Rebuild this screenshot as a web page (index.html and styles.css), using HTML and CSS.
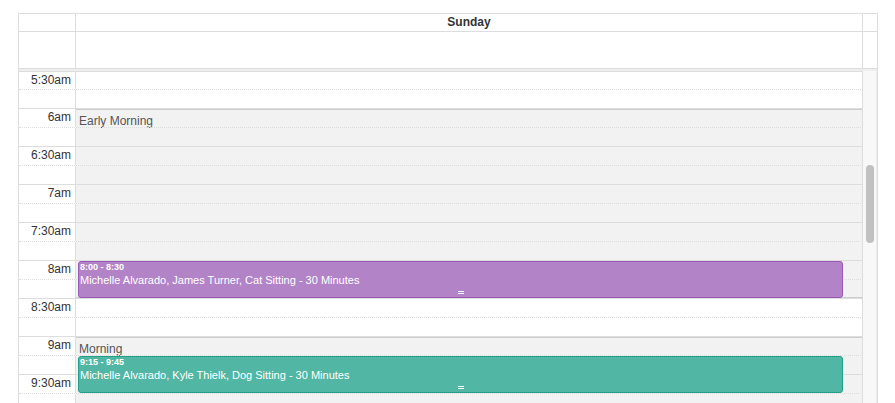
FILE: index.html
```html
<!DOCTYPE html>
<html lang="en">
<head>
    <meta charset="UTF-8">
    <title>Day Schedule</title>
    <link rel="stylesheet" href="styles.css">
</head>
<body>
    <div class="calendar">
        <div class="cal-row cal-head">
            <div class="axis"></div>
            <div class="day-cell day-name">Sunday</div>
            <div class="gutter"></div>
        </div>
        <div class="cal-row cal-allday">
            <div class="axis"></div>
            <div class="day-cell"></div>
            <div class="gutter"></div>
        </div>
        <div class="divider"></div>
        <div class="cal-body">
            <div class="slots">
                <div class="bg-layer">
                    <div class="bg-event" style="top: 37px; height: 190px;">Early Morning</div>
                    <div class="bg-event" style="top: 265px; height: 400px;">Morning</div>
                </div>

                <div class="slot major first"><div class="slot-label">5:30am</div><div class="slot-lane"></div></div>
                <div class="slot minor"><div class="slot-label"></div><div class="slot-lane"></div></div>
                <div class="slot major"><div class="slot-label">6am</div><div class="slot-lane"></div></div>
                <div class="slot minor"><div class="slot-label"></div><div class="slot-lane"></div></div>
                <div class="slot major"><div class="slot-label">6:30am</div><div class="slot-lane"></div></div>
                <div class="slot minor"><div class="slot-label"></div><div class="slot-lane"></div></div>
                <div class="slot major"><div class="slot-label">7am</div><div class="slot-lane"></div></div>
                <div class="slot minor"><div class="slot-label"></div><div class="slot-lane"></div></div>
                <div class="slot major"><div class="slot-label">7:30am</div><div class="slot-lane"></div></div>
                <div class="slot minor"><div class="slot-label"></div><div class="slot-lane"></div></div>
                <div class="slot major"><div class="slot-label">8am</div><div class="slot-lane"></div></div>
                <div class="slot minor"><div class="slot-label"></div><div class="slot-lane"></div></div>
                <div class="slot major"><div class="slot-label">8:30am</div><div class="slot-lane"></div></div>
                <div class="slot minor"><div class="slot-label"></div><div class="slot-lane"></div></div>
                <div class="slot major"><div class="slot-label">9am</div><div class="slot-lane"></div></div>
                <div class="slot minor"><div class="slot-label"></div><div class="slot-lane"></div></div>
                <div class="slot major"><div class="slot-label">9:30am</div><div class="slot-lane"></div></div>
                <div class="slot minor"><div class="slot-label"></div><div class="slot-lane"></div></div>

                <div class="event-layer">
                    <div class="event event-purple" style="top: 190px; height: 37px;">
                        <div class="event-time">8:00 - 8:30</div>
                        <div class="event-title">Michelle Alvarado, James Turner, Cat Sitting - 30 Minutes</div>
                        <div class="resizer"></div>
                    </div>
                    <div class="event event-green" style="top: 285px; height: 37px;">
                        <div class="event-time">9:15 - 9:45</div>
                        <div class="event-title">Michelle Alvarado, Kyle Thielk, Dog Sitting - 30 Minutes</div>
                        <div class="resizer"></div>
                    </div>
                </div>
            </div>
            <div class="scrollbar"><div class="thumb"></div></div>
        </div>
    </div>
</body>
</html>
```

FILE: styles.css
```css
html, body {
    height: 100%;
    overflow: hidden;
}
body {
    margin: 0;
    padding: 13px 0 0 18px;
    box-sizing: border-box;
    font-family: 'Liberation Sans', Arial, sans-serif;
    font-size: 12px;
    color: #333;
    background: #fff;
}
.calendar {
    width: 860px;
    border: 1px solid #ddd;
    box-sizing: border-box;
}
.cal-row {
    display: grid;
    grid-template-columns: 57px 1fr 14px;
    border-bottom: 1px solid #ddd;
}
.cal-row .axis,
.cal-row .day-cell {
    border-right: 1px solid #ddd;
}
.cal-head {
    height: 18px;
    box-sizing: border-box;
}
.day-name {
    text-align: center;
    font-weight: bold;
    font-size: 12px;
    line-height: 17px;
}
.cal-allday {
    height: 37px;
    box-sizing: border-box;
}
.divider {
    height: 2px;
    background: #eee;
}
.cal-body {
    display: flex;
    height: 332px;
    overflow: hidden;
}
.slots {
    flex: 1;
    position: relative;
}
.slot {
    display: grid;
    grid-template-columns: 57px 1fr;
    height: 19px;
    box-sizing: border-box;
    position: relative;
    z-index: 1;
}
.slot.major {
    border-top: 1px solid #ddd;
}
.slot.minor {
    border-top: 1px dotted #ddd;
}
.slot.first {
    height: 18px;
}
.slot-label {
    border-right: 1px solid #ddd;
    text-align: right;
    padding: 1px 4px 0 0;
    line-height: 14px;
    white-space: nowrap;
}
.slot-lane {
    border-right: 1px solid #ddd;
}
.bg-layer,
.event-layer {
    position: absolute;
    top: 0;
    bottom: 0;
    left: 57px;
    right: 1px;
}
.bg-layer {
    z-index: 0;
}
.event-layer {
    z-index: 2;
}
.bg-event {
    position: absolute;
    left: 0;
    right: 0;
    background: #f2f2f2;
    border-top: 2px solid #cdcdcd;
    border-bottom: 1px solid #cdcdcd;
    box-sizing: border-box;
    color: #555;
    padding: 4px 3px 0;
    line-height: 14px;
}
.event {
    position: absolute;
    left: 2px;
    right: 19px;
    border: 1px solid;
    border-radius: 3px;
    box-sizing: border-box;
    color: #fff;
    padding: 0 1px;
    overflow: hidden;
}
.event-purple {
    background: #b383c8;
    border-color: #9b59b6;
}
.event-green {
    background: #51b6a3;
    border-color: #22a088;
}
.event-time {
    font-size: 9px;
    font-weight: bold;
    line-height: 11px;
}
.event-title {
    font-size: 11px;
    line-height: 14px;
}
.resizer {
    position: absolute;
    left: 50%;
    bottom: 3px;
    width: 6px;
    height: 3px;
    margin-left: -3px;
    border-top: 1px solid #fff;
    border-bottom: 1px solid #fff;
    box-sizing: border-box;
}
.scrollbar {
    width: 14px;
    background: #f8f8f8;
    border-right: 1px solid #ececec;
    box-sizing: border-box;
    position: relative;
}
.thumb {
    position: absolute;
    top: 94px;
    left: 3px;
    width: 8px;
    height: 78px;
    border-radius: 4px;
    background: #c1c1c1;
}
```
